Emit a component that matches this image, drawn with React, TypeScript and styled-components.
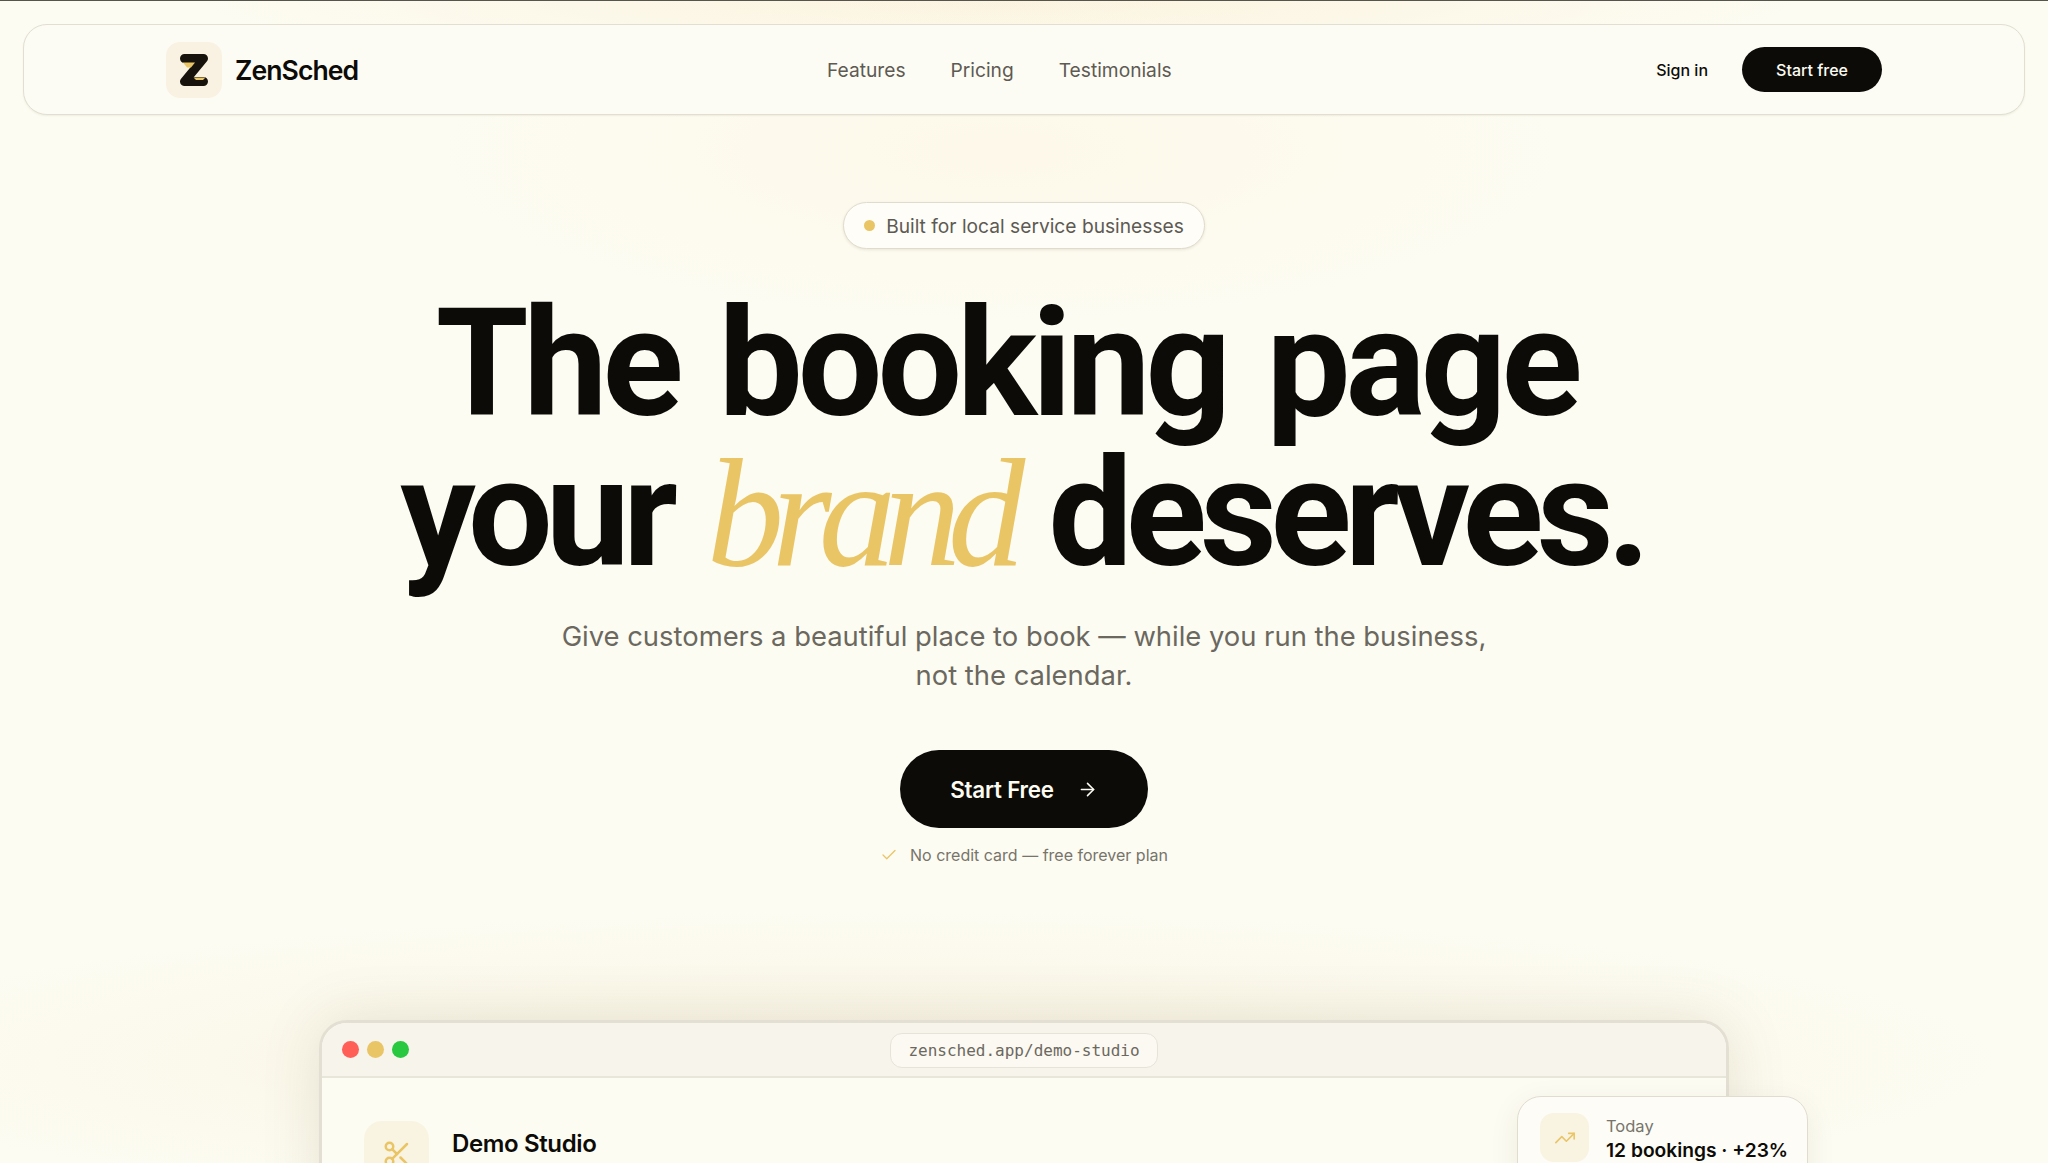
import { ArrowRight, Check, Scissors, TrendingUp } from "lucide-react";
import styled, { createGlobalStyle } from "styled-components";

const GlobalStyle = createGlobalStyle`
  html, body {
    margin: 0;
    height: 100%;
    overflow: hidden;
    background: #fdfcf2;
  }

  * {
    box-sizing: border-box;
  }
`;

const Page = styled.div`
  height: 1163px;
  overflow: hidden;
  padding: 23px 23px 0;
  border-top: 1px solid #55554e;
  font-family: Inter, "Liberation Sans", sans-serif;
  color: #0d0b08;
  background:
    radial-gradient(ellipse 560px 170px at 1000px 150px, #fdf8e9 0%, rgba(253, 248, 233, 0) 100%),
    radial-gradient(ellipse 800px 70px at 1000px 0px, #fbf3de 0%, rgba(251, 243, 222, 0) 100%),
    radial-gradient(ellipse 1100px 150px at 900px 1060px, #f8f3e2 0%, rgba(248, 243, 226, 0) 100%),
    #fdfcf2;
`;

const Nav = styled.header`
  height: 91px;
  padding: 0 142px;
  display: grid;
  grid-template-columns: 661px auto 1fr;
  align-items: center;
  border: 1px solid #e2dfd2;
  border-radius: 24px;
  background: #fdfcf4;
  box-shadow: 0 1px 2px rgba(60, 50, 20, 0.07);
`;

const Brand = styled.div`
  display: flex;
  align-items: center;
  gap: 13px;
`;

const LogoTile = styled.div`
  width: 56px;
  height: 56px;
  border-radius: 14px;
  background: #f9f2e2;
  display: flex;
  align-items: center;
  justify-content: center;
`;

const BrandName = styled.span`
  font-size: 26.6px;
  font-weight: 600;
  letter-spacing: -0.035em;
`;

const NavLinks = styled.nav`
  display: flex;
  gap: 45px;
  font-size: 19.2px;
  color: #5d5a53;
`;

const NavActions = styled.div`
  display: flex;
  justify-content: flex-end;
  align-items: center;
  gap: 34px;
`;

const SignIn = styled.span`
  font-size: 16px;
  font-weight: 500;
`;

const SmallButton = styled.span`
  width: 140px;
  height: 45px;
  border-radius: 23px;
  background: #0d0b08;
  color: #fdfcf2;
  font-size: 16px;
  font-weight: 500;
  display: flex;
  align-items: center;
  justify-content: center;
`;

const Hero = styled.main`
  display: flex;
  flex-direction: column;
  align-items: center;
  padding-top: 87px;
`;

const Pill = styled.div`
  height: 47px;
  padding: 0 20px;
  display: flex;
  align-items: center;
  gap: 11px;
  border: 1px solid #e0dccd;
  border-radius: 24px;
  background: #fefdf8;
  box-shadow: 0 1px 3px rgba(60, 50, 20, 0.1);
  font-size: 19.2px;
  color: #5d5a53;
`;

const Dot = styled.span<{ $color: string; $size: number }>`
  width: ${({ $size }) => $size}px;
  height: ${({ $size }) => $size}px;
  border-radius: 50%;
  background: ${({ $color }) => $color};
`;

const Headline = styled.h1`
  margin: 40px 0 0;
  font-family: Roboto, Inter, sans-serif;
  font-size: 150px;
  line-height: 150px;
  font-weight: 700;
  text-align: center;
  white-space: nowrap;
`;

const HeadLine = styled.span<{ $tracking: number; $words: number; $inset: number }>`
  display: block;
  padding-right: ${({ $inset }) => $inset}px;
  letter-spacing: ${({ $tracking }) => $tracking}em;
  word-spacing: ${({ $words }) => $words}px;
`;

const Accent = styled.em`
  font-family: "Liberation Serif", serif;
  font-size: 1.03em;
  line-height: 0;
  font-weight: 400;
  font-style: italic;
  letter-spacing: -0.082em;
  color: #e9c566;
`;

const Lead = styled.p`
  margin: 28px 0 0;
  font-size: 27.4px;
  line-height: 39px;
  color: #6b6860;
  text-align: center;
`;

const Cta = styled.div`
  margin-top: 55px;
  width: 248px;
  height: 78px;
  border-radius: 39px;
  background: #0d0b08;
  color: #fdfcf2;
  font-size: 22.4px;
  font-weight: 600;
  letter-spacing: -0.01em;
  display: flex;
  align-items: center;
  justify-content: center;
  gap: 23px;
`;

const Reassure = styled.div`
  margin-top: 17px;
  display: flex;
  align-items: center;
  gap: 12px;
  font-size: 16px;
  color: #77746c;

  svg {
    color: #e9c566;
  }
`;

const BrowserWrap = styled.div`
  position: relative;
  margin-top: 155px;
  width: 1410px;
`;

const Browser = styled.section`
  height: 300px;
  border: 3px solid #e3e0d3;
  border-radius: 28px 28px 0 0;
  background: #fdfcf2;
  overflow: hidden;
  box-shadow: 0 0 60px rgba(90, 75, 30, 0.13);
`;

const BrowserBar = styled.div`
  position: relative;
  height: 55px;
  padding: 0 20px;
  display: flex;
  align-items: center;
  gap: 8px;
  background: #f7f4ec;
  border-bottom: 2px solid #e8e5da;
`;

const UrlBox = styled.div`
  position: absolute;
  left: 50%;
  top: 10px;
  transform: translateX(-50%);
  width: 268px;
  height: 35px;
  border: 1px solid #e6e3d8;
  border-radius: 12px;
  background: #fbf9f1;
  font-family: "DejaVu Sans Mono", "Liberation Mono", monospace;
  font-size: 16px;
  color: #6b6860;
  display: flex;
  align-items: center;
  justify-content: center;
`;

const BrowserBody = styled.div`
  padding: 43px 42px 0;
  display: flex;
  gap: 23px;
`;

const IconTile = styled.div<{ $size: number; $radius: number }>`
  width: ${({ $size }) => $size}px;
  height: ${({ $size }) => $size}px;
  border-radius: ${({ $radius }) => $radius}px;
  background: #f9f3e2;
  color: #e9c566;
  flex: none;
  display: flex;
  align-items: center;
  justify-content: center;
`;

const StudioName = styled.div`
  margin-top: 8px;
  font-size: 24px;
  font-weight: 600;
  letter-spacing: -0.015em;
`;

const StatCard = styled.aside`
  position: absolute;
  right: -79px;
  top: 76px;
  width: 291px;
  height: 120px;
  padding: 16px 22px;
  display: flex;
  gap: 17px;
  border: 1px solid #e0ddd0;
  border-radius: 24px;
  background: #fdfcf6;
  box-shadow: 0 8px 30px rgba(60, 50, 20, 0.08);
`;

const StatLabel = styled.div`
  margin-top: 2px;
  font-size: 16.5px;
  line-height: 22px;
  color: #77746c;
`;

const StatValue = styled.div`
  font-size: 19.2px;
  line-height: 26px;
  font-weight: 600;
  white-space: nowrap;
`;

const ZLogo = () => (
  <svg width="28" height="32" viewBox="0 0 28 32" aria-hidden="true">
    <path
      d="M4.5 4.5H23.5L4.5 27.5H23.5"
      fill="none"
      stroke="#17130c"
      strokeWidth="9"
      strokeLinecap="round"
      strokeLinejoin="round"
    />
    <path d="M3 8.5H15L11 13.5H7Z" fill="#e9c566" />
    <path d="M13.5 23.5H25.5L23 26H16Z" fill="#e9c566" />
  </svg>
);

const App = () => {
  return (
    <Page>
      <GlobalStyle />
      <Nav>
        <Brand>
          <LogoTile>
            <ZLogo />
          </LogoTile>
          <BrandName>ZenSched</BrandName>
        </Brand>
        <NavLinks>
          <span>Features</span>
          <span>Pricing</span>
          <span>Testimonials</span>
        </NavLinks>
        <NavActions>
          <SignIn>Sign in</SignIn>
          <SmallButton>Start free</SmallButton>
        </NavActions>
      </Nav>

      <Hero>
        <Pill>
          <Dot $color="#e9c566" $size={11} />
          Built for local service businesses
        </Pill>
        <Headline>
          <HeadLine $tracking={-0.034} $words={8} $inset={35}>
            The booking page
          </HeadLine>
          <HeadLine $tracking={-0.045} $words={5} $inset={4}>
            your <Accent>brand</Accent> deserves.
          </HeadLine>
        </Headline>
        <Lead>
          Give customers a beautiful place to book — while you run the business,
          <br />
          not the calendar.
        </Lead>
        <Cta>
          Start Free
          <ArrowRight size={21} strokeWidth={1.75} />
        </Cta>
        <Reassure>
          <Check size={18} strokeWidth={1.75} />
          No credit card — free forever plan
        </Reassure>

        <BrowserWrap>
          <Browser>
            <BrowserBar>
              <Dot $color="#ff5f57" $size={17} />
              <Dot $color="#e9c566" $size={17} />
              <Dot $color="#28c840" $size={17} />
              <UrlBox>zensched.app/demo-studio</UrlBox>
            </BrowserBar>
            <BrowserBody>
              <IconTile $size={65} $radius={18}>
                <Scissors size={30} strokeWidth={2} />
              </IconTile>
              <StudioName>Demo Studio</StudioName>
            </BrowserBody>
          </Browser>
          <StatCard>
            <IconTile $size={49} $radius={14}>
              <TrendingUp size={22} strokeWidth={1.75} />
            </IconTile>
            <div>
              <StatLabel>Today</StatLabel>
              <StatValue>12 bookings · +23%</StatValue>
            </div>
          </StatCard>
        </BrowserWrap>
      </Hero>
    </Page>
  );
};

export default App;
